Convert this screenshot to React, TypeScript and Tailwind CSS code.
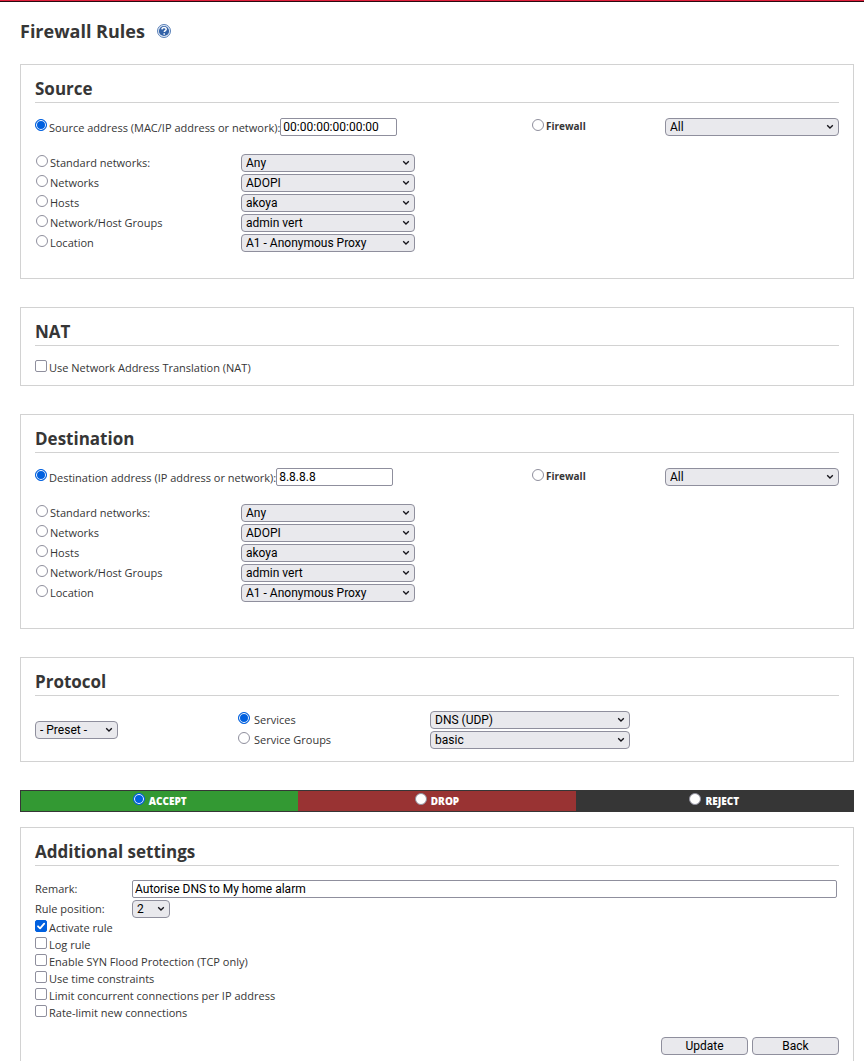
import React, { useState } from 'react';

const FORM_FONT = "font-['Roboto',sans-serif] text-[12px] text-black";

interface SelectProps {
  id: string;
  label: string;
  value: string;
  className?: string;
}

const Select: React.FC<SelectProps> = ({ id, label, value, className = '' }) => (
  <div className={`relative h-[18px] ${className}`}>
    <select
      id={id}
      aria-label={label}
      defaultValue={value}
      className={`block h-[18px] w-full appearance-none rounded-[4px] border border-[#8f8f9d] bg-[#e9e9ed] pl-1 pr-4 leading-4 ${FORM_FONT}`}
    >
      <option>{value}</option>
    </select>
    <svg
      viewBox="0 0 8 6"
      className="pointer-events-none absolute right-[5px] top-[6px] h-[6px] w-[8px]"
      fill="none"
      stroke="#15141a"
      strokeWidth="1.3"
    >
      <path d="M1.2 1.2 4 4l2.8-2.8" />
    </svg>
  </div>
);

interface RadioProps {
  id: string;
  name: string;
  checked?: boolean;
  onChange?: () => void;
}

const Radio: React.FC<RadioProps> = ({ id, name, checked = false, onChange }) => (
  <input
    type="radio"
    id={id}
    name={name}
    checked={checked}
    onChange={onChange}
    className="mt-px h-3 w-3 shrink-0 appearance-none rounded-full border border-[#8f8f9d] bg-white checked:border-[#0060df] checked:bg-[#0060df] checked:shadow-[inset_0_0_0_1px_white]"
  />
);

interface CheckProps {
  id: string;
  label: string;
  defaultChecked?: boolean;
}

const Check: React.FC<CheckProps> = ({ id, label, defaultChecked }) => (
  <div className="flex h-[17px] items-start gap-[2px]">
    <span className="relative h-3 w-3 shrink-0">
      <input
        type="checkbox"
        id={id}
        defaultChecked={defaultChecked}
        className="peer block h-3 w-3 appearance-none rounded-[2px] border border-[#8f8f9d] bg-white checked:border-[#0060df] checked:bg-[#0060df]"
      />
      <svg
        viewBox="0 0 12 12"
        className="pointer-events-none absolute inset-0 hidden h-3 w-3 peer-checked:block"
        fill="none"
        stroke="white"
        strokeWidth="1.8"
        strokeLinecap="round"
        strokeLinejoin="round"
      >
        <path d="M3 6.3 5.1 8.4 9.2 3.6" />
      </svg>
    </span>
    <label htmlFor={id} className="leading-4">{label}</label>
  </div>
);

interface SectionProps {
  title: string;
  className?: string;
  children: React.ReactNode;
}

const Section: React.FC<SectionProps> = ({ title, className = '', children }) => (
  <section className={`border border-[#d2d2d2] px-[14px] pt-[11px] ${className}`}>
    <h2 className="mb-[14px] border-b border-[#d2d2d2] pb-px text-[17px] font-bold leading-[25px]">{title}</h2>
    {children}
  </section>
);

const networkRows = [
  { key: 'std', label: 'Standard networks:', value: 'Any' },
  { key: 'net', label: 'Networks', value: 'ADOPI' },
  { key: 'host', label: 'Hosts', value: 'akoya' },
  { key: 'group', label: 'Network/Host Groups', value: 'admin vert' },
  { key: 'location', label: 'Location', value: 'A1 - Anonymous Proxy' },
];

interface AddressProps {
  name: string;
  label: string;
  address: string;
}

const AddressFields: React.FC<AddressProps> = ({ name, label, address }) => {
  const [selected, setSelected] = useState('address');
  const radio = (key: string) => (
    <Radio id={`${name}-${key}`} name={name} checked={selected === key} onChange={() => setSelected(key)} />
  );

  return (
    <div className="pt-px">
      <div className="flex h-[18px]">
        <div className="flex min-w-0 flex-1 items-start gap-[2px]">
          {radio('address')}
          <label htmlFor={`${name}-address`} className="whitespace-nowrap pt-[2px] leading-4">{label}</label>
          <input
            type="text"
            aria-label={label}
            defaultValue={address}
            className={`-ml-[2px] h-[18px] w-[117px] rounded-[2px] border border-[#8f8f9d] bg-white px-[2px] leading-4 ${FORM_FONT}`}
          />
        </div>
        <div className="flex w-[133px] items-start gap-[2px]">
          {radio('firewall')}
          <label htmlFor={`${name}-firewall`} className="text-[10px] font-bold leading-4">Firewall</label>
        </div>
        <Select id={`${name}-fw`} label="Firewall interface" value="All" className="w-[174px]" />
      </div>
      <div className="mt-[18px] flex flex-col gap-[2px] pl-px">
        {networkRows.map((row) => (
          <div key={row.key} className="flex h-[18px]">
            <div className="flex w-[205px] items-start gap-[2px]">
              {radio(row.key)}
              <label htmlFor={`${name}-${row.key}`} className="leading-[18px]">{row.label}</label>
            </div>
            <Select id={`${name}-${row.key}-value`} label={row.label} value={row.value} className="w-[174px]" />
          </div>
        ))}
      </div>
    </div>
  );
};

const actions = [
  { key: 'ACCEPT', bg: 'bg-[#339933]' },
  { key: 'DROP', bg: 'bg-[#993333]' },
  { key: 'REJECT', bg: 'bg-[#363636]' },
];

const App: React.FC = () => {
  const [service, setService] = useState('services');
  const [action, setAction] = useState('ACCEPT');

  return (
    <div className="flex min-h-screen flex-col bg-white font-['Open_Sans',sans-serif] text-[11px] text-[#363636]">
      <div className="h-[2px] border-b border-[#2a0a10] bg-[#e2203c]" />
      <main className="flex flex-1 flex-col pl-5 pr-[10px]">
        <header className="flex h-[62px] items-start gap-3 pt-[17px]">
          <h1 className="text-[18px] font-bold leading-[25px]">Firewall Rules</h1>
          <a href="#help" aria-label="Help" className="mt-[5px] block">
            <svg viewBox="0 0 14 14" className="h-[14px] w-[14px]">
              <circle cx="7" cy="7" r="6.5" fill="#e4ecf7" stroke="#5a80b8" />
              <circle cx="7" cy="7" r="5.1" fill="#3463a8" />
              <path d="M4.9 5.4c.1-1.3 1-2 2.2-2s2.1.7 2.1 1.8c0 1.5-1.9 1.5-1.9 2.9M7.2 9.3v1.4" fill="none" stroke="#fff" strokeWidth="1.5" />
            </svg>
          </a>
        </header>

        <form className="flex flex-1 flex-col" onSubmit={(e) => e.preventDefault()}>
          <div className="flex flex-col gap-7">
            <Section title="Source" className="pb-[26px]">
              <AddressFields name="source" label="Source address (MAC/IP address or network):" address="00:00:00:00:00:00" />
            </Section>

            <Section title="NAT" className="pb-2">
              <Check id="nat" label="Use Network Address Translation (NAT)" />
            </Section>

            <Section title="Destination" className="pb-[26px]">
              <AddressFields name="destination" label="Destination address (IP address or network):" address="8.8.8.8" />
            </Section>

            <Section title="Protocol" className="pb-3">
              <div className="flex items-center pt-px">
                <Select id="preset" label="Protocol" value="- Preset -" className="w-[83px]" />
                <div className="ml-[120px] flex flex-col gap-[2px]">
                  <div className="flex h-[18px]">
                    <div className="flex w-[192px] items-start gap-1">
                      <Radio id="services" name="service" checked={service === 'services'} onChange={() => setService('services')} />
                      <label htmlFor="services" className="leading-[18px]">Services</label>
                    </div>
                    <Select id="services-value" label="Services" value="DNS (UDP)" className="w-[200px]" />
                  </div>
                  <div className="flex h-[18px]">
                    <div className="flex w-[192px] items-start gap-1">
                      <Radio id="groups" name="service" checked={service === 'groups'} onChange={() => setService('groups')} />
                      <label htmlFor="groups" className="leading-[18px]">Service Groups</label>
                    </div>
                    <Select id="groups-value" label="Service Groups" value="basic" className="w-[200px]" />
                  </div>
                </div>
              </div>
            </Section>

            <div className="grid h-[22px] grid-cols-3 border border-[#363636]">
              {actions.map((a) => (
                <div key={a.key} className={`flex items-start justify-center gap-1 pt-px ${a.bg}`}>
                  <Radio id={a.key} name="action" checked={action === a.key} onChange={() => setAction(a.key)} />
                  <label htmlFor={a.key} className="text-[10px] font-extrabold leading-[18px] text-white">{a.key}</label>
                </div>
              ))}
            </div>
          </div>

          <Section title="Additional settings" className="mt-[15px] flex-1 border-b-0 pb-[6px]">
            <div className="grid grid-cols-[97px_1fr] gap-y-[2px] pr-[2px]">
              <label htmlFor="remark" className="leading-[18px]">Remark:</label>
              <input
                type="text"
                id="remark"
                defaultValue="Autorise DNS to My home alarm"
                className={`h-[18px] w-full rounded-[2px] border border-[#8f8f9d] bg-white px-[2px] leading-4 ${FORM_FONT}`}
              />
              <label htmlFor="position" className="leading-[18px]">Rule position:</label>
              <Select id="position" label="Rule position" value="2" className="w-[38px]" />
            </div>
            <div className="mt-[2px]">
              <Check id="active" label="Activate rule" defaultChecked />
              <Check id="log" label="Log rule" />
              <Check id="syn" label="Enable SYN Flood Protection (TCP only)" />
              <Check id="time" label="Use time constraints" />
              <Check id="limit" label="Limit concurrent connections per IP address" />
              <Check id="rate" label="Rate-limit new connections" />
            </div>
            <div className="mt-[15px] flex justify-end gap-1">
              {['Update', 'Back'].map((text) => (
                <button
                  key={text}
                  type="button"
                  className={`h-[18px] w-[87px] rounded-[4px] border border-[#8f8f9d] bg-[#e9e9ed] leading-4 ${FORM_FONT}`}
                >
                  {text}
                </button>
              ))}
            </div>
          </Section>
        </form>
      </main>
    </div>
  );
};

export default App;
